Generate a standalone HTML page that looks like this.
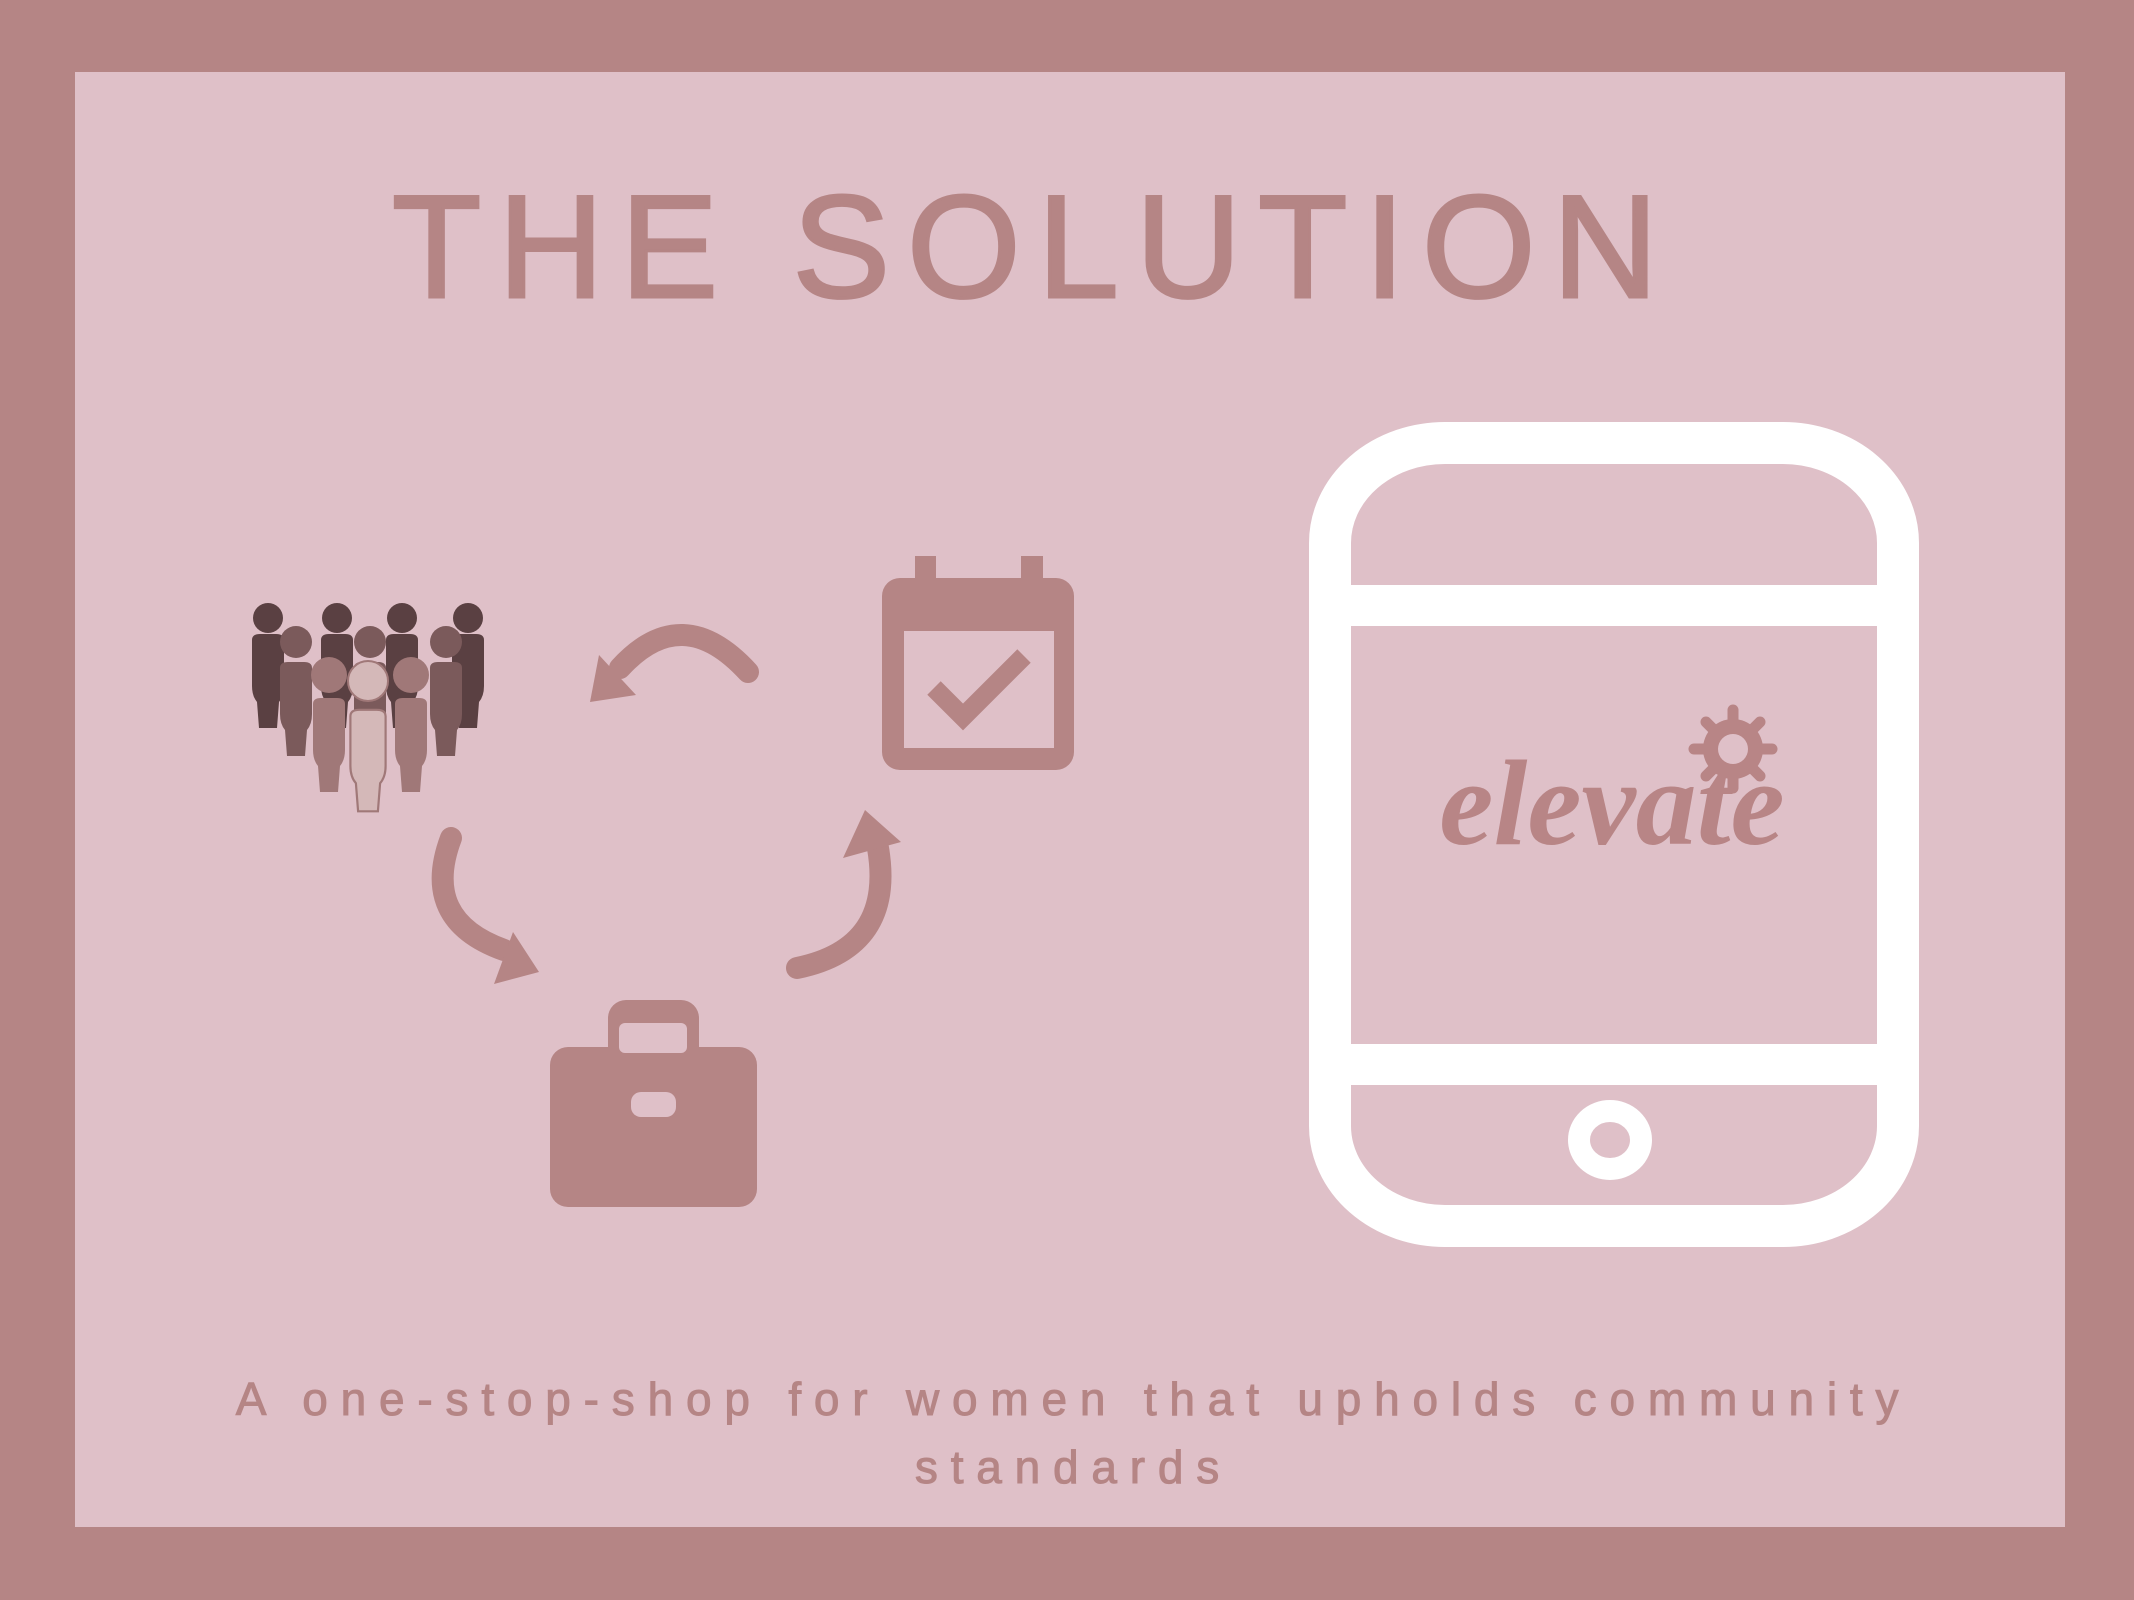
<!DOCTYPE html>
<html><head><meta charset="utf-8"><style>
html,body{margin:0;padding:0}
body{width:2134px;height:1600px;background:#b58585;position:relative;overflow:hidden;font-family:"Liberation Sans",sans-serif}
#panel{position:absolute;left:75px;top:72px;width:1990px;height:1455px;background:#dfc0c8}
.t{position:absolute;left:0;width:2134px;text-align:center;color:#b58585}
#title{left:-42px;top:174px;font-size:146px;letter-spacing:17px;line-height:1;text-indent:17px;-webkit-text-stroke:3px #b58585}
.sub{font-size:46px;letter-spacing:12.8px;line-height:1;text-indent:13px;-webkit-text-stroke:1px #b58585}
</style></head><body>
<div id="panel"></div>
<div class="t" id="title">THE SOLUTION</div>
<div class="t sub" style="top:1376px">A one-stop-shop for women that upholds community</div>
<div class="t sub" style="top:1444px">standards</div>
<svg width="2134" height="1600" style="position:absolute;left:0;top:0">
<defs>
<path id="p" d="M-16,0 Q-16,-6 -8,-6 L8,-6 Q16,-6 16,0 L16,46 Q16,56 11,62 L9,88 L-9,88 L-11,62 Q-16,56 -16,46 Z"/>
</defs>
<g fill="#b58585">
<rect x="915" y="556" width="21" height="40"/><rect x="1021" y="556" width="22" height="40"/>
<rect x="882" y="578" width="192" height="192" rx="18"/>
</g>
<rect x="904" y="631" width="150" height="117" fill="#dfc0c8"/>
<polyline points="934,688 963,717 1024,656" fill="none" stroke="#b58585" stroke-width="19"/>
<g fill="#b58585">
<rect x="608" y="1000" width="91" height="70" rx="18"/>
<rect x="550" y="1047" width="207" height="160" rx="18"/>
</g>
<rect x="619" y="1023" width="68" height="30" rx="6" fill="#dfc0c8"/>
<rect x="631" y="1092" width="45" height="25" rx="10" fill="#dfc0c8"/>
<g fill="none" stroke="#b58585" stroke-width="22" stroke-linecap="round">
<path d="M748,672 Q682,600 620,668"/>
<path d="M451,838 Q420,920 504,950"/>
<path d="M797,968 Q895,948 878,848"/>
</g>
<g fill="#b58585">
<polygon points="599,655 590,702 636,695"/>
<polygon points="513,932 539,972 494,984"/>
<polygon points="865,810 901,842 843,858"/>
</g>
<g fill="#5a4042">
<circle cx="268" cy="618" r="15"/><circle cx="337" cy="618" r="15"/><circle cx="402" cy="618" r="15"/><circle cx="468" cy="618" r="15"/>
<use href="#p" x="268" y="640"/><use href="#p" x="337" y="640"/><use href="#p" x="402" y="640"/><use href="#p" x="468" y="640"/>
</g>
<g fill="#7b5a5b">
<circle cx="296" cy="642" r="16"/><circle cx="370" cy="642" r="16"/><circle cx="446" cy="642" r="16"/>
<use href="#p" x="296" y="668"/><use href="#p" x="370" y="668"/><use href="#p" x="446" y="668"/>
</g>
<g fill="#a07878">
<circle cx="329" cy="675" r="18"/><circle cx="411" cy="675" r="18"/>
<use href="#p" x="329" y="704"/><use href="#p" x="411" y="704"/>
</g>
<g fill="#d4b8b8" stroke="#a07878" stroke-width="2">
<circle cx="368" cy="681" r="20"/>
<use href="#p" x="368" y="716" transform="matrix(1.1,0,0,1.08,-36.8,-57)"/>
</g>
<rect x="1330" y="443" width="568" height="783" rx="115" ry="100" fill="none" stroke="#fff" stroke-width="42"/>
<rect x="1351" y="585" width="526" height="41" fill="#fff"/>
<rect x="1351" y="1044" width="526" height="41" fill="#fff"/>
<ellipse cx="1610" cy="1140" rx="31" ry="29" fill="none" stroke="#fff" stroke-width="22"/>
<g fill="#b88586">
<circle cx="1733" cy="749" r="30"/>
<g stroke="#b88586" stroke-width="11" stroke-linecap="round">
<line x1="1733" y1="710" x2="1733" y2="788"/><line x1="1694" y1="749" x2="1772" y2="749"/>
<line x1="1706" y1="722" x2="1760" y2="776"/><line x1="1760" y1="722" x2="1706" y2="776"/>
</g>
</g>
<circle cx="1733" cy="749" r="15" fill="#dfc0c8"/>
<text x="1612" y="844" text-anchor="middle" font-family="Liberation Serif" font-style="italic" font-weight="bold" font-size="122" fill="#b88586">elevate</text>
</svg>
</body></html>
